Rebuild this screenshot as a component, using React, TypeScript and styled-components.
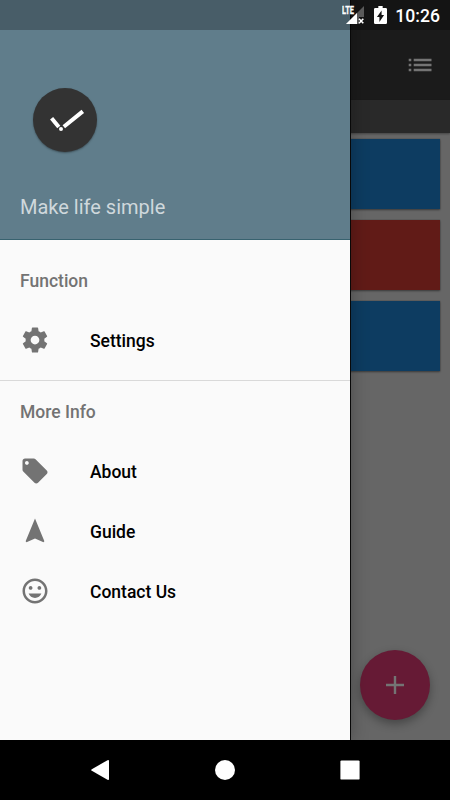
import React from 'react';
import styled, { createGlobalStyle } from 'styled-components';

const Global = createGlobalStyle`
  * { box-sizing: border-box; }
  body { margin: 0; font-family: Roboto, "Liberation Sans", sans-serif; }
`;

const Phone = styled.div`
  width: 450px;
  height: 800px;
  display: flex;
  flex-direction: column;
  overflow: hidden;
  background: #000;
`;

const Screen = styled.div`
  position: relative;
  height: 740px;
  overflow: hidden;
  background: #666;
`;

const StatusBar = styled.div`
  position: absolute;
  inset: 0 0 auto 0;
  z-index: 3;
  height: 30px;
  padding-right: 10px;
  display: flex;
  align-items: center;
  justify-content: flex-end;
  color: #fff;
  background: rgba(0, 0, 0, 0.25);
`;

const SignalIcon = styled.svg`
  width: 24px;
  height: 24px;
  margin-right: 8px;
`;

const BatteryIcon = styled.svg`
  width: 13px;
  height: 18px;
  margin-right: 9px;
`;

const Clock = styled.span`
  width: 44px;
  font-size: 17.6px;
  font-weight: 500;
  line-height: 30px;
  padding-top: 1px;
  white-space: nowrap;
  display: flex;
  justify-content: flex-end;
`;

const AppBar = styled.div`
  height: 100px;
  padding: 30px 15px 0 0;
  display: flex;
  align-items: center;
  justify-content: flex-end;
  background: #1b1b1b;
`;

const FilterStrip = styled.div`
  height: 33px;
  background: #292929;
  box-shadow: 0 1px 2px rgba(0, 0, 0, 0.35);
`;

const Cards = styled.div`
  padding: 6px 10px;
  display: flex;
  flex-direction: column;
  gap: 11px;
`;

const Card = styled.div<{ $color: string }>`
  height: 70px;
  background: ${(p) => p.$color};
  box-shadow: 0 0 1px rgba(0, 0, 0, 0.4), 0 1px 2px rgba(0, 0, 0, 0.4);
`;

const Fab = styled.div`
  position: absolute;
  right: 20px;
  bottom: 20px;
  width: 70px;
  height: 70px;
  border-radius: 50%;
  display: grid;
  place-items: center;
  background: #661a35;
  box-shadow: 0 4px 10px rgba(0, 0, 0, 0.32);
`;

const Drawer = styled.aside`
  position: absolute;
  inset: 0 auto 0 0;
  z-index: 2;
  width: 350px;
  background: #fafafa;
  box-shadow: 1px 0 0 #080808, 2px 0 16px rgba(0, 0, 0, 0.26);
`;

const DrawerHeader = styled.header`
  height: 240px;
  padding: 88px 20px 0 33px;
  background: #607d8b;
  border-bottom: 1px solid #38626f;
`;

const Logo = styled.div`
  width: 64px;
  height: 64px;
  border-radius: 50%;
  background: #333;
  box-shadow: 0 1px 2px rgba(0, 0, 0, 0.35);
`;

const Tagline = styled.div`
  margin: 43px 0 0 -13px;
  font-size: 20px;
  line-height: 24px;
  color: #cfd8dc;
`;

const Section = styled.section`
  height: 141px;
  padding-top: 10px;
  border-bottom: 1px solid #d9d9d9;

  &:last-child {
    height: auto;
    padding-top: 0;
    border-bottom: 0;
  }
`;

const SectionTitle = styled.h2`
  margin: 0;
  height: 60px;
  padding-left: 20px;
  font-size: 17.5px;
  font-weight: 500;
  line-height: 63px;
  color: #737373;
`;

const MenuRow = styled.div`
  height: 60px;
  padding-left: 20px;
  display: flex;
  align-items: center;
  gap: 40px;
`;

const MenuLabel = styled.span`
  padding-top: 2px;
  font-size: 17.5px;
  font-weight: 500;
  color: #000;
`;

const Glyph = styled.svg`
  width: 30px;
  height: 30px;
  flex: none;
  fill: #737373;
`;

const NavBar = styled.nav`
  height: 60px;
  padding: 0 37.5px;
  display: grid;
  grid-template-columns: repeat(3, 125px);
  place-items: center;
`;

const icons = {
  settings:
    'M19.43 12.98c.04-.32.07-.64.07-.98s-.03-.66-.07-.98l2.11-1.65c.19-.15.24-.42.12-.64l-2-3.46c-.12-.22-.39-.3-.61-.22l-2.49 1c-.52-.4-1.08-.73-1.69-.98l-.38-2.65C14.46 2.18 14.25 2 14 2h-4c-.25 0-.46.18-.49.42l-.38 2.65c-.61.25-1.17.59-1.69.98l-2.49-1c-.23-.09-.49 0-.61.22l-2 3.46c-.13.22-.07.49.12.64l2.11 1.65c-.04.32-.07.65-.07.98s.03.66.07.98l-2.11 1.65c-.19.15-.24.42-.12.64l2 3.46c.12.22.39.3.61.22l2.49-1c.52.4 1.08.73 1.69.98l.38 2.65c.03.24.24.42.49.42h4c.25 0 .46-.18.49-.42l.38-2.65c.61-.25 1.17-.59 1.69-.98l2.49 1c.23.09.49 0 .61-.22l2-3.46c.12-.22.07-.49-.12-.64l-2.11-1.65zM12 15.5c-1.93 0-3.5-1.57-3.5-3.5s1.57-3.5 3.5-3.5 3.5 1.57 3.5 3.5-1.57 3.5-3.5 3.5z',
  tag: 'M21.41 11.58l-9-9C12.05 2.22 11.55 2 11 2H4c-1.1 0-2 .9-2 2v7c0 .55.22 1.05.59 1.42l9 9c.36.36.86.58 1.41.58.55 0 1.05-.22 1.41-.59l7-7c.37-.36.59-.86.59-1.41 0-.55-.23-1.06-.59-1.42zM5.5 7C4.67 7 4 6.33 4 5.5S4.67 4 5.5 4 7 4.67 7 5.5 6.33 7 5.5 7z',
  navigation: 'M12 2L4.5 20.29l.71.71L12 18l6.79 3 .71-.71z',
  smile:
    'M11.99 2C6.47 2 2 6.48 2 12s4.47 10 9.99 10C17.52 22 22 17.52 22 12S17.52 2 11.99 2zM12 20c-4.42 0-8-3.58-8-8s3.58-8 8-8 8 3.58 8 8-3.58 8-8 8zm3.5-9c.83 0 1.5-.67 1.5-1.5S16.33 8 15.5 8 14 8.67 14 9.5s.67 1.5 1.5 1.5zm-7 0c.83 0 1.5-.67 1.5-1.5S9.33 8 8.5 8 7 8.67 7 9.5 7.67 11 8.5 11zM12 17.5c2.33 0 4.31-1.46 5.11-3.5H6.89c.8 2.04 2.78 3.5 5.11 3.5z',
};

function MenuItem({ icon, label }: { icon: keyof typeof icons; label: string }) {
  return (
    <MenuRow>
      <Glyph viewBox="0 0 24 24">
        <path d={icons[icon]} />
      </Glyph>
      <MenuLabel>{label}</MenuLabel>
    </MenuRow>
  );
}

const SignalLabel = styled.text`
  font: 700 11px Roboto, "Open Sans", sans-serif;
  fill: #fff;
  stroke: #fff;
  stroke-width: 0.3px;
`;

export default function App() {
  return (
    <Phone>
      <Global />
      <Screen>
        <AppBar>
          <svg width="30" height="30" viewBox="0 0 30 30" fill="#747474">
            <path d="M3.7 8.7h2.6v2.6H3.7zM8.7 8.7h17.8v2.6H8.7zM3.7 13.7h2.6v2.6H3.7zM8.7 13.7h17.8v2.6H8.7zM3.7 18.7h2.6v2.6H3.7zM8.7 18.7h17.8v2.6H8.7z" />
          </svg>
        </AppBar>
        <FilterStrip />
        <Cards>
          <Card $color="#0d3c61" />
          <Card $color="#611b17" />
          <Card $color="#0d3c61" />
        </Cards>
        <Fab>
          <svg width="18" height="18" viewBox="0 0 18 18" fill="#747474">
            <path d="M7.8 0h2.4v7.8H18v2.4h-7.8V18H7.8v-7.8H0V7.8h7.8z" />
          </svg>
        </Fab>
        <Drawer>
          <DrawerHeader>
            <Logo>
              <svg width="64" height="64" viewBox="0 0 64 64" stroke="#fff" fill="#fff">
                <path d="M18.6 30.2L25.8 39M30.8 38.7L49.8 23.4" strokeWidth="4" />
                <circle cx="28" cy="40.9" r="2" stroke="none" />
              </svg>
            </Logo>
            <Tagline>Make life simple</Tagline>
          </DrawerHeader>
          <Section>
            <SectionTitle>Function</SectionTitle>
            <MenuItem icon="settings" label="Settings" />
          </Section>
          <Section>
            <SectionTitle>More Info</SectionTitle>
            <MenuItem icon="tag" label="About" />
            <MenuItem icon="navigation" label="Guide" />
            <MenuItem icon="smile" label="Contact Us" />
          </Section>
        </Drawer>
        <StatusBar>
          <SignalIcon viewBox="0 0 24 24" fill="#fff">
            <path d="M22 3v11h-5v7H4z" opacity=".3" />
            <path d="M15 10v11H4z" />
            <path d="M17 15.7l4.3 4.5M21.3 15.7l-4.3 4.5" stroke="#fff" strokeWidth="1.6" />
            <SignalLabel x="0" y="11" textLength="12" lengthAdjust="spacingAndGlyphs">LTE</SignalLabel>
          </SignalIcon>
          <BatteryIcon viewBox="0 0 12 18" preserveAspectRatio="none" fill="#fff">
            <path
              fillRule="evenodd"
              d="M4 0h4v2h2.8Q12 2 12 3.2v13.6Q12 18 10.8 18H1.2Q0 18 0 16.8V3.2Q0 2 1.2 2H4zM7 4.5L2.7 11H5v5l4.3-7H7z"
            />
          </BatteryIcon>
          <Clock>10:26</Clock>
        </StatusBar>
      </Screen>
      <NavBar>
        <svg width="20" height="22" viewBox="0 0 20 22" fill="#fff">
          <path d="M1.8 10.2L17.5 1.2Q19 .5 19 2v18q0 1.5-1.5.8L1.8 11.8Q.5 11 1.8 10.2z" />
        </svg>
        <svg width="20" height="20" viewBox="0 0 20 20" fill="#fff">
          <circle cx="10" cy="10" r="10" />
        </svg>
        <svg width="20" height="20" viewBox="0 0 20 20" fill="#fff">
          <rect x=".4" y=".4" width="19.2" height="19.2" rx="1.2" />
        </svg>
      </NavBar>
    </Phone>
  );
}
